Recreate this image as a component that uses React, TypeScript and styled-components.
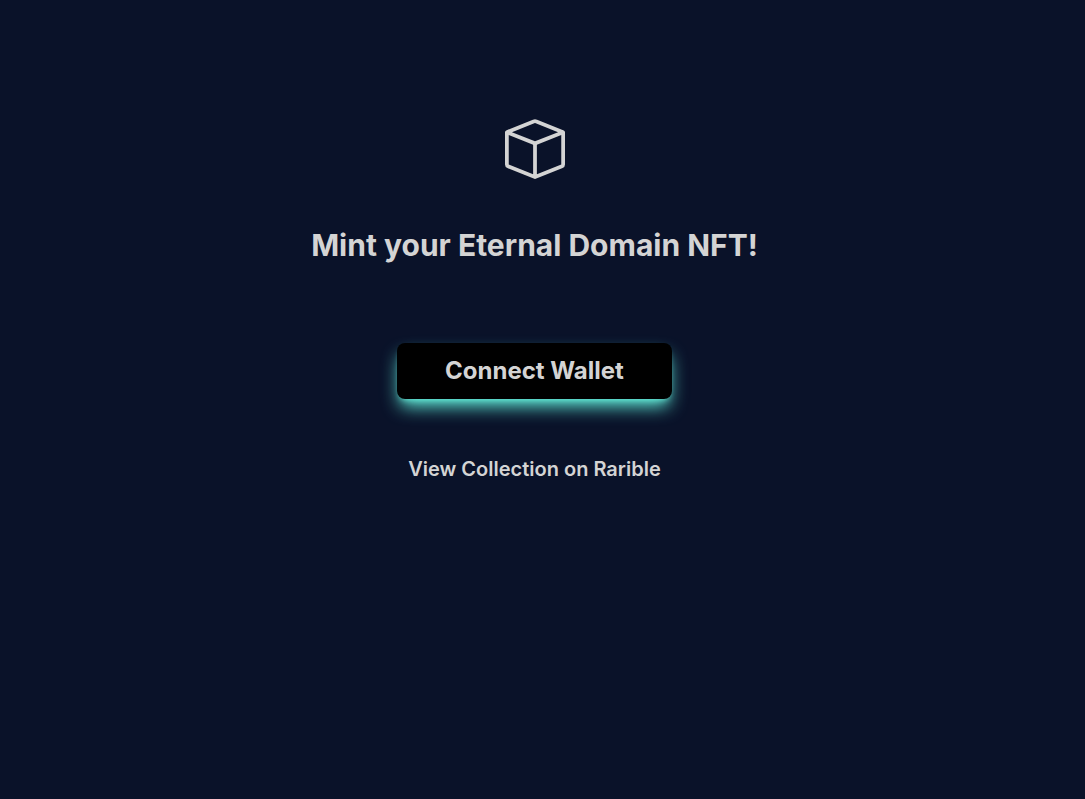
import styled, { createGlobalStyle } from "styled-components";
import { BsBox } from "react-icons/bs";

const GlobalStyle = createGlobalStyle`
  body {
    margin: 0;
    background: #0a1229;
    color: #d4d4d4;
    font-family: Inter, "Liberation Sans", sans-serif;
  }
`;

const Page = styled.main`
  min-height: 100vh;
  box-sizing: border-box;
  padding: 119px 16px 64px 0;
  display: flex;
  flex-direction: column;
  align-items: center;
`;

const Title = styled.h1`
  margin: 48px 0 80px;
  font-size: 30px;
  line-height: 36px;
  font-weight: 700;
  text-align: center;
`;

const ConnectButton = styled.button`
  border: 0;
  border-radius: 8px;
  padding: 12px 48px;
  background: #000;
  color: inherit;
  font: inherit;
  font-size: 24px;
  line-height: 32px;
  font-weight: 700;
  cursor: pointer;
  box-shadow: 0 10px 18px -3px #64f0dc, 0 4px 6px -4px #64f0dc;
`;

const CollectionLink = styled.a`
  margin-top: 56px;
  color: inherit;
  font-size: 20px;
  line-height: 28px;
  font-weight: 600;
  text-decoration: none;
`;

export default function App() {
  return (
    <>
      <GlobalStyle />
      <Page>
        <BsBox size={60} aria-hidden="true" />
        <Title>Mint your Eternal Domain NFT!</Title>
        <ConnectButton type="button">Connect Wallet</ConnectButton>
        <CollectionLink href="#collection">View Collection on Rarible</CollectionLink>
      </Page>
    </>
  );
}
